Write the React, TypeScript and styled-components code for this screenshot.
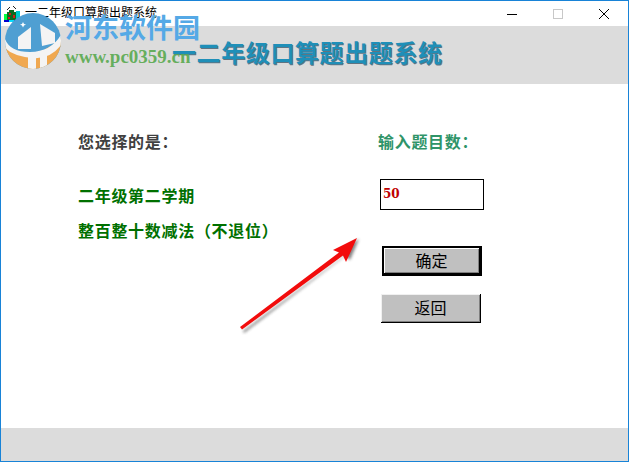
import React from "react";
import styled, { createGlobalStyle } from "styled-components";

const GlobalStyle = createGlobalStyle`
    html, body {
        margin: 0;
        padding: 0;
        background: #ffffff;
    }
`;

const cjk = `"Liberation Serif", "Noto Sans CJK SC", serif`;

function App() {
    return (
        <>
            <GlobalStyle />
            <Window>
                <TitleBar>
                    <AppIcon viewBox="0 0 16 16" shapeRendering="crispEdges">
                        <rect width="16" height="16" fill="#ffffff" />
                        <path d="M0 8h3v8H0z" fill="#00ff40" />
                        <path d="M12 5h4v9h-4z" fill="#00c8d0" />
                        <path d="M3 6h2V4h5v2h2v8H3z" fill="#0c6a20" />
                        <path d="M5 7h2v2H5zM9 9h2v3H9zM4 11h2v2H4z" fill="#d81818" />
                        <path d="M3 3h1V2h1V1h1v1H5v1H4v1H3zM9 0h1v1h1v1h1v1h-1V2h-1V1H9z" fill="#202020" />
                        <path d="M0 14h16v2H0z" fill="#0000d0" />
                        <path d="M5 14h5v2H5z" fill="#00e0ff" />
                    </AppIcon>
                    <TitleText>一二年级口算题出题系统</TitleText>
                    <Controls>
                        <ControlIcon viewBox="0 0 46 26">
                            <path d="M18 13.5h10" stroke="#000000" />
                        </ControlIcon>
                        <ControlIcon viewBox="0 0 46 26">
                            <rect x="18.5" y="8.5" width="9" height="9" fill="none" stroke="#c8c8c8" />
                        </ControlIcon>
                        <ControlIcon viewBox="0 0 46 26">
                            <path d="M18 8l10 10M28 8L18 18" stroke="#000000" />
                        </ControlIcon>
                    </Controls>
                </TitleBar>
                <Banner>
                    <BannerTitle>一二年级口算题出题系统</BannerTitle>
                </Banner>
                <Content>
                    <LeftColumn>
                        <Caption>您选择的是：</Caption>
                        <Choices>
                            <Choice>二年级第二学期</Choice>
                            <Choice>整百整十数减法（不退位）</Choice>
                        </Choices>
                    </LeftColumn>
                    <RightColumn>
                        <CountLabel>输入题目数：</CountLabel>
                        <CountInput readOnly value="50" />
                        <ConfirmButton>确定</ConfirmButton>
                        <BackButton>返回</BackButton>
                    </RightColumn>
                </Content>
                <Footer />
                <Arrow viewBox="0 0 140 105">
                    <defs>
                        <filter id="arrowBlur" x="-20%" y="-20%" width="140%" height="140%">
                            <feGaussianBlur stdDeviation="1.6" />
                        </filter>
                    </defs>
                    <g filter="url(#arrowBlur)" fill="#404040" opacity="0.65">
                        <path d="M13 101L114 26l-3-5 18-12-9 21-5-4L14 103z" />
                    </g>
                    <path d="M10 97L109 22.500l-6-2.500L127 8l-11 24-3-6.500L12 99.500z" fill="#f20c0c" />
                </Arrow>
                <Watermark>
                    <WatermarkLogo viewBox="0 0 58 56">
                        <defs>
                            <clipPath id="logoCircle">
                                <circle cx="29" cy="28" r="28" />
                            </clipPath>
                        </defs>
                        <g clipPath="url(#logoCircle)">
                            <rect width="58" height="56" fill="#4f9fd2" />
                            <path d="M0 32Q29 52 58 24V56H0z" fill="#f0a850" />
                            <path d="M1 26Q6 39 26 39Q48 39 58 20V31Q46 47 28 45Q8 43 0 34z" fill="#f4f4f4" />
                            <path d="M24 42h8v14h-8zM36 42h7v14h-7z" fill="#f4f4f4" />
                            <path d="M14 24L27 14V36H14z" fill="#f4f4f4" />
                            <path d="M36 11L51 20V30L38 33z" fill="#f4f4f4" />
                            <path d="M19 9l1 2 2 .5-2 1-1 2-1-2-2-1 2-.5z" fill="#ffffff" />
                        </g>
                    </WatermarkLogo>
                    <WatermarkText>
                        <WatermarkName>河东软件园</WatermarkName>
                        <WatermarkUrl>www.pc0359.cn</WatermarkUrl>
                    </WatermarkText>
                </Watermark>
            </Window>
        </>
    );
}

export default App;

const Window = styled.div`
    position: relative;
    box-sizing: border-box;
    width: 629px;
    height: 462px;
    border: 1px solid #1883d7;
    display: flex;
    flex-direction: column;
    background: #ffffff;
    overflow: hidden;
`;

const TitleBar = styled.div`
    height: 25px;
    display: flex;
    align-items: center;
    padding-left: 3px;
    flex-shrink: 0;
`;

const AppIcon = styled.svg`
    width: 16px;
    height: 16px;
    margin-right: 5px;
`;

const TitleText = styled.span`
    font: 12px/14px ${cjk};
    color: #000000;
    margin-bottom: 1px;
`;

const Controls = styled.div`
    margin-left: auto;
    margin-right: 1px;
    display: flex;
`;

const ControlIcon = styled.svg`
    width: 46px;
    height: 26px;
`;

const Banner = styled.div`
    height: 58px;
    flex-shrink: 0;
    background: #dcdcdc;
    display: flex;
    align-items: center;
    padding-left: 171px;
    padding-bottom: 2px;
    box-sizing: border-box;
`;

const BannerTitle = styled.div`
    font: bold 24px/1 ${cjk};
    letter-spacing: 0.6px;
    color: #1f8fb8;
    text-shadow: 1px 1px 0 rgba(40, 70, 90, 0.7);
`;

const Content = styled.div`
    flex: 1;
    display: flex;
    padding: 49px 0 0 77px;
`;

const LeftColumn = styled.div`
    width: 300px;
    display: flex;
    flex-direction: column;
`;

const Caption = styled.div`
    font: bold 16px/20px ${cjk};
    letter-spacing: 0.7px;
    color: #404040;
`;

const Choices = styled.div`
    margin-top: 34px;
    display: flex;
    flex-direction: column;
    gap: 15px;
`;

const Choice = styled.div`
    font: bold 16px/20px ${cjk};
    letter-spacing: 0.7px;
    color: #007000;
    white-space: nowrap;
`;

const RightColumn = styled.div`
    display: flex;
    flex-direction: column;
    align-items: flex-start;
`;

const CountLabel = styled.div`
    font: bold 16px/20px ${cjk};
    letter-spacing: 0.7px;
    color: #2f9468;
`;

const CountInput = styled.input`
    box-sizing: border-box;
    width: 104px;
    height: 31px;
    margin: 26px 0 0 2px;
    padding: 0 0 2px 2px;
    border: 1px solid #000000;
    outline: none;
    background: #ffffff;
    font: bold 12px "DejaVu Serif", serif;
    color: #c00000;
`;

const BaseButton = styled.button`
    box-sizing: border-box;
    width: 100px;
    padding: 2px 0 0;
    background: #c0c0c0;
    font: 16px/1 ${cjk};
    color: #000000;
`;

const ConfirmButton = styled(BaseButton)`
    height: 30px;
    margin: 36px 0 0 4px;
    border: 2px solid #000000;
    border-right-width: 3px;
    border-bottom-width: 3px;
    box-shadow: inset 1px 1px 0 #ffffff, inset -1px -1px 0 #808080;
`;

const BackButton = styled(BaseButton)`
    height: 29px;
    margin: 18px 0 0 3px;
    border: none;
    border-right: 1px solid #000000;
    border-bottom: 1px solid #000000;
    box-shadow: inset 1px 1px 0 #f0f0f0, inset -1px -1px 0 #808080;
`;

const Footer = styled.div`
    height: 33px;
    flex-shrink: 0;
    background: #dcdcdc;
`;

const Arrow = styled.svg`
    position: absolute;
    left: 229px;
    top: 229px;
    width: 140px;
    height: 105px;
`;

const Watermark = styled.div`
    position: absolute;
    left: 3px;
    top: 12px;
    display: flex;
    gap: 3px;
    pointer-events: none;
`;

const WatermarkLogo = styled.svg`
    width: 58px;
    height: 56px;
`;

const WatermarkText = styled.div`
    display: flex;
    flex-direction: column;
    gap: 1px;
`;

const WatermarkName = styled.div`
    font: bold 27px/32px ${cjk};
    color: #55a9e6;
`;

const WatermarkUrl = styled.div`
    font: bold 19px/22px "Liberation Serif", serif;
    color: rgba(90, 170, 80, 0.92);
`;
